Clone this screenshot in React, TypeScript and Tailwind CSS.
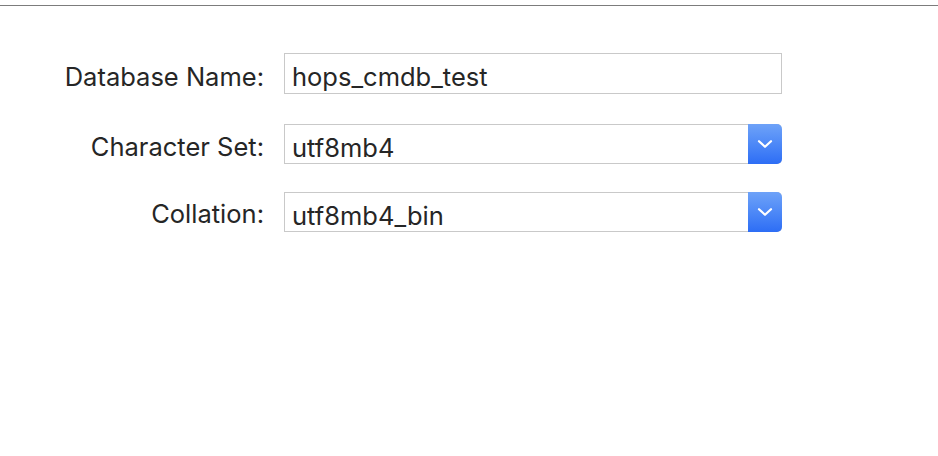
import React from "react";

function Chevron() {
  return (
    <svg width="16" height="10" viewBox="0 0 16 10" fill="none">
      <path d="M2 2.2 L8 7.8 L14 2.2" stroke="white" strokeWidth="2.2" strokeLinecap="round" strokeLinejoin="round" />
    </svg>
  );
}

function Select({ value }: { value: string }) {
  return (
    <div className="flex h-[40px] w-[498px] border border-[#c9c9c9] border-r-0 bg-white rounded-r-[5px]">
      <div className="flex-1 pl-[7px] pt-[8px] text-[25.5px] leading-[29px] text-[#262626]">{value}</div>
      <div className="-mt-px -mb-px w-[34px] flex items-center justify-center rounded-r-[5px] bg-gradient-to-b from-[#6ea2f8] to-[#2d6df5]">
        <Chevron />
      </div>
    </div>
  );
}

function Label({ children, pt }: { children: React.ReactNode; pt: string }) {
  return (
    <div className={`w-[264px] text-right text-[25.5px] leading-[29px] text-[#262626] ${pt}`}>{children}</div>
  );
}

export default function App() {
  return (
    <div
      className="w-[938px] h-[456px] bg-white overflow-hidden"
      style={{ fontFamily: "Inter, 'Noto Sans', sans-serif" }}
    >
      <div className="h-[5px] bg-white" />
      <div className="h-px bg-[#7c7c7c]" />
      <div className="flex flex-col pt-[47px]">
        <div className="flex items-start">
          <Label pt="pt-[9px]">Database Name:</Label>
          <div className="ml-[20px] h-[41px] w-[498px] border border-[#c9c9c9] bg-white pl-[7px] pt-[8px] text-[25.5px] leading-[29px] text-[#262626]">
            hops_cmdb_test
          </div>
        </div>
        <div className="flex items-start mt-[30px]">
          <Label pt="pt-[8px]">Character Set:</Label>
          <div className="ml-[20px]">
            <Select value="utf8mb4" />
          </div>
        </div>
        <div className="flex items-start mt-[28px]">
          <Label pt="pt-[7px]">Collation:</Label>
          <div className="ml-[20px]">
            <Select value="utf8mb4_bin" />
          </div>
        </div>
      </div>
    </div>
  );
}
